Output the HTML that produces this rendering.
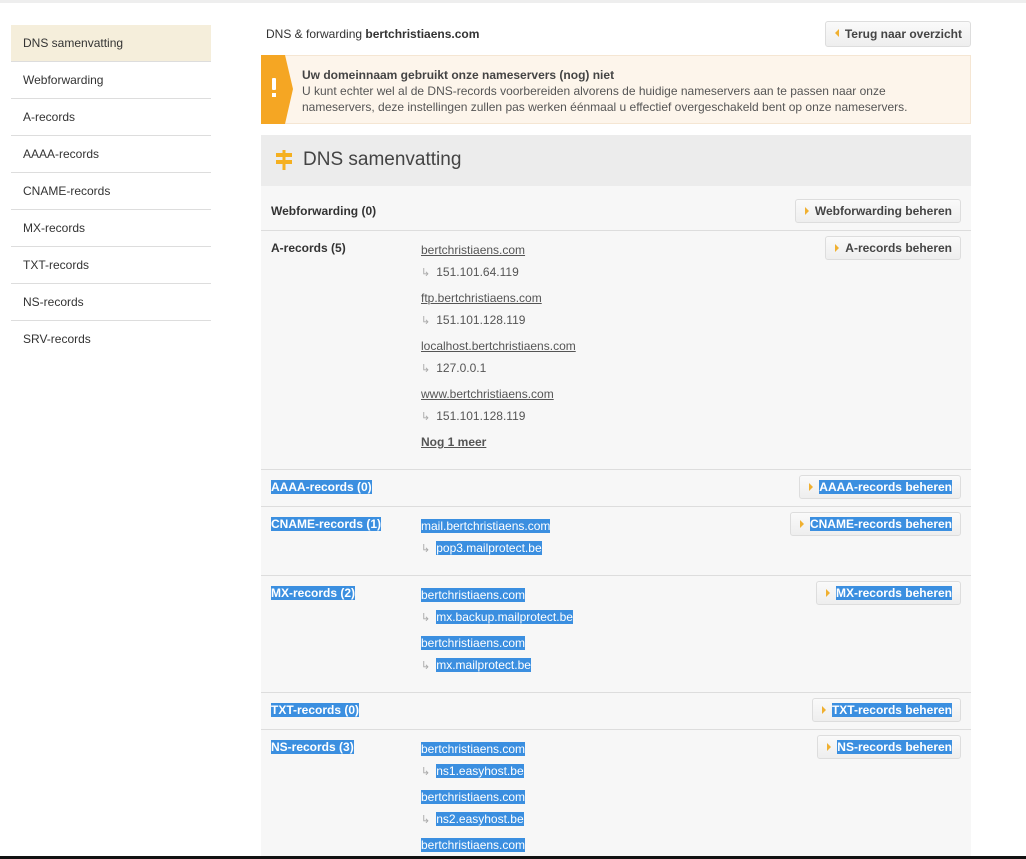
<!DOCTYPE html>
<html><head><meta charset="utf-8"><style>
*{margin:0;padding:0;box-sizing:border-box}
body{width:1026px;height:859px;overflow:hidden;background:#fff;font-family:"Liberation Sans",Arial,sans-serif;font-size:12px;color:#333;position:relative}
.abs{position:absolute}
.topline{left:0;top:0;width:1026px;height:3px;background:#eee}
.bot{left:0;top:856px;width:1026px;height:3px;background:#111}
.side{left:11px;top:25px;width:200px}
.side div{height:37px;line-height:36px;padding-left:12px;border-bottom:1px solid #ddd;color:#333}
.side div.on{background:#f5eedb}
.btn{position:absolute;right:65px;height:24px;line-height:22px;border:1px solid #ddd;border-radius:3px;background:linear-gradient(#fafafa,#eee);font-weight:bold;color:#444;padding:0 8px 0 19px;white-space:nowrap}
.btn:before{content:"";position:absolute;left:9px;top:7px;border-left:4px solid #f0b030;border-top:4px solid transparent;border-bottom:4px solid transparent}
.btn.back:before{border-left:0;border-right:4px solid #f0b030;left:9px}
.sel .t{background:#3b8fe0;color:#fff}
.row{position:absolute;left:261px;width:710px;background:#f7f7f7;border-top:1px solid #ddd}
.lbl{position:absolute;left:10px;font-weight:bold;color:#333}
.v{position:absolute;left:160px;color:#555;white-space:nowrap}
.u{text-decoration:underline}
.ar{color:#aaa;font-size:11px;margin-right:6px}
</style></head><body>
<div class="abs topline"></div>
<div class="abs side">
<div class="on">DNS samenvatting</div><div>Webforwarding</div><div>A-records</div><div>AAAA-records</div><div>CNAME-records</div><div>MX-records</div><div>TXT-records</div><div>NS-records</div><div style="border:0">SRV-records</div>
</div>
<div class="abs" style="left:266px;top:27px;font-size:12px">DNS &amp; forwarding <b>bertchristiaens.com</b></div>
<div class="btn back" style="right:55px;top:21px;height:26px;line-height:24px">Terug naar overzicht</div>
<div class="abs" style="left:261px;top:55px;width:710px;height:69px;background:#fdf5eb;border:1px solid #f5e6d3"></div>
<svg class="abs" style="left:261px;top:55px" width="34" height="69"><polygon points="0,0 24,0 32,34 24,69 0,69" fill="#f5a623"/><rect x="11" y="23" width="4" height="12" rx="1" fill="#fff"/><rect x="11" y="38" width="4" height="4" fill="#fff"/></svg>
<div class="abs" style="left:302px;top:67px;line-height:16px;color:#555"><b style="color:#444">Uw domeinnaam gebruikt onze nameservers (nog) niet</b><br>U kunt echter wel al de DNS-records voorbereiden alvorens de huidige nameservers aan te passen naar onze<br>nameservers, deze instellingen zullen pas werken éénmaal u effectief overgeschakeld bent op onze nameservers.</div>
<div class="abs" style="left:261px;top:135px;width:710px;height:51px;background:#ececec"></div>
<svg class="abs" style="left:275px;top:150px" width="18" height="20"><rect x="7.5" y="0" width="3" height="20" fill="#f5b020"/><rect x="1" y="3" width="16" height="4" fill="#f5b020"/><rect x="1" y="10" width="16" height="4" fill="#f5b020"/></svg>
<div class="abs" style="left:303px;top:149px;font-size:19px;color:#444">DNS samenvatting</div>

<div class="row" style="top:186px;height:45px;border-top:0"><div class="lbl" style="top:18px">Webforwarding (0)</div></div>
<div class="btn" style="top:199px">Webforwarding beheren</div>

<div class="row" style="top:230px;height:240px">
<div class="lbl" style="top:10px">A-records (5)</div>
<div class="v u" style="top:12px">bertchristiaens.com</div>
<div class="v" style="top:34px"><span class="ar">↳</span>151.101.64.119</div>
<div class="v u" style="top:60px">ftp.bertchristiaens.com</div>
<div class="v" style="top:82px"><span class="ar">↳</span>151.101.128.119</div>
<div class="v u" style="top:108px">localhost.bertchristiaens.com</div>
<div class="v" style="top:130px"><span class="ar">↳</span>127.0.0.1</div>
<div class="v u" style="top:156px">www.bertchristiaens.com</div>
<div class="v" style="top:178px"><span class="ar">↳</span>151.101.128.119</div>
<div class="v u" style="top:204px;font-weight:bold">Nog 1 meer</div>
</div>
<div class="btn" style="top:236px">A-records beheren</div>

<div class="sel">
<div class="row" style="top:469px;height:38px"><div class="lbl t" style="top:10px">AAAA-records (0)</div></div>
<div class="btn" style="top:475px"><span class="t">AAAA-records beheren</span></div>

<div class="row" style="top:506px;height:70px">
<div class="lbl t" style="top:10px">CNAME-records (1)</div>
<div class="v t" style="top:12px">mail.bertchristiaens.com</div>
<div class="v" style="top:34px"><span class="ar">↳</span><span class="t">pop3.mailprotect.be</span></div>
</div>
<div class="btn" style="top:512px"><span class="t">CNAME-records beheren</span></div>

<div class="row" style="top:575px;height:118px">
<div class="lbl t" style="top:10px">MX-records (2)</div>
<div class="v t" style="top:12px">bertchristiaens.com</div>
<div class="v" style="top:34px"><span class="ar">↳</span><span class="t">mx.backup.mailprotect.be</span></div>
<div class="v t" style="top:60px">bertchristiaens.com</div>
<div class="v" style="top:82px"><span class="ar">↳</span><span class="t">mx.mailprotect.be</span></div>
</div>
<div class="btn" style="top:581px"><span class="t">MX-records beheren</span></div>

<div class="row" style="top:692px;height:38px"><div class="lbl t" style="top:10px">TXT-records (0)</div></div>
<div class="btn" style="top:698px"><span class="t">TXT-records beheren</span></div>

<div class="row" style="top:729px;height:127px">
<div class="lbl t" style="top:10px">NS-records (3)</div>
<div class="v t" style="top:12px">bertchristiaens.com</div>
<div class="v" style="top:34px"><span class="ar">↳</span><span class="t">ns1.easyhost.be</span></div>
<div class="v t" style="top:60px">bertchristiaens.com</div>
<div class="v" style="top:82px"><span class="ar">↳</span><span class="t">ns2.easyhost.be</span></div>
<div class="v t" style="top:108px">bertchristiaens.com</div>
</div>
<div class="btn" style="top:735px"><span class="t">NS-records beheren</span></div>
</div>
<div class="abs bot"></div>
</body></html>
